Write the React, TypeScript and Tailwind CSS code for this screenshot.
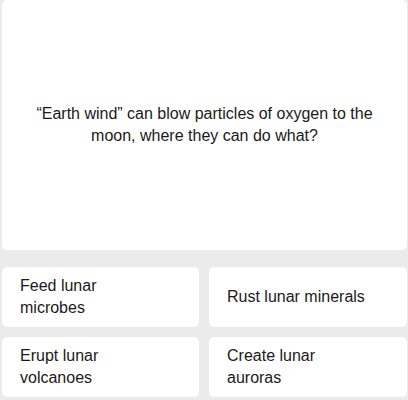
import React from 'react';

const answers = ['Feed lunar microbes', 'Rust lunar minerals', 'Erupt lunar volcanoes', 'Create lunar auroras'];

const App: React.FC = () => {
    return (
        <div
            className="w-[408px] h-[400px] bg-[#ebebeb] pl-[2px] pr-[1px] flex flex-col text-[#1a1a1a]"
            style={{ fontFamily: '"Liberation Sans", Arial, sans-serif' }}
        >
            {/* Question */}
            <div className="h-[250px] bg-white rounded-[5px] flex items-center justify-center px-[24px]">
                <p className="text-[16px] leading-[22px] text-center">
                    “Earth wind” can blow particles of oxygen to the moon, where they can do what?
                </p>
            </div>

            {/* Answers */}
            <div className="mt-[17px] grid grid-cols-[197px_198px] auto-rows-[60px] gap-[10px]">
                {answers.map((a) => (
                    <button
                        key={a}
                        className="bg-white rounded-[5px] flex items-center pl-[18px] text-left"
                    >
                        <span className="max-w-[142px] text-[16px] leading-[22px]">{a}</span>
                    </button>
                ))}
            </div>
        </div>
    );
};

export default App;
